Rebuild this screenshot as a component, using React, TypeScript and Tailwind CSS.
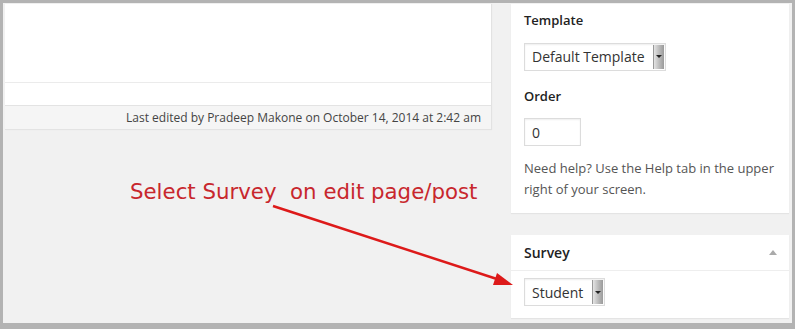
// fake select, the old-school grey drop button on the right
function OldSelect({ label, width }: { label: string; width: string }) {
  return (
    <div className={`flex h-[28px] items-stretch border border-[#dcdcdc] bg-white shadow-[inset_0_1px_2px_rgba(0,0,0,0.07)] ${width}`}>
      <span className="flex flex-1 items-center pl-[7px] text-[14px] text-[#333]">{label}</span>
      <span className="my-[1px] mr-[1px] flex w-[11px] items-center justify-center border-l border-[#999] bg-gradient-to-r from-[#e4e4e4] via-[#bdbdbd] to-[#9a9a9a]">
        <span className="h-0 w-0 border-x-[3px] border-t-[3px] border-x-transparent border-t-[#222]" />
      </span>
    </div>
  )
}

export default function App() {
  return (
    <div className="relative h-[329px] w-[795px] overflow-hidden border-[3px] border-b-[6px] border-[#b3b3b3] bg-[#f1f1f1] font-['Open_Sans',sans-serif] text-[13px] text-[#444]">
      <div className="flex h-full gap-[20px] pl-[2px] pr-[3px] pt-[1px]">
        {/* editor column */}
        <div className="w-[486px]">
          <div className="bg-white shadow-[1px_0_1px_rgba(0,0,0,0.06)]">
            <div className="h-[79px] border-b border-[#ebebeb]" />
            <div className="h-[22px]" />
            <div className="flex h-[25px] items-center justify-end border-y border-[#e3e3e3] bg-[#f5f5f5] pr-[10px] text-[12px] text-[#444]">
              Last edited by Pradeep Makone on October 14, 2014 at 2:42 am
            </div>
          </div>
        </div>

        {/* sidebar */}
        <div className="flex w-[278px] flex-col">
          <div className="h-[209px] bg-white px-[13px] shadow-[0_1px_1px_rgba(0,0,0,0.05)]">
            <p className="pt-[7px] font-semibold text-[#222]">Template</p>
            <div className="mt-[12px]">
              <OldSelect label="Default Template" width="w-[142px]" />
            </div>
            <p className="mt-[16px] font-semibold text-[#222]">Order</p>
            <div className="mt-[12px] flex h-[28px] w-[57px] items-center border border-[#dcdcdc] pl-[7px] text-[14px] text-[#333] shadow-[inset_0_1px_2px_rgba(0,0,0,0.07)]">
              0
            </div>
            <p className="mt-[12px] leading-[21px] text-[#555]">
              Need help? Use the Help tab in the upper right of your screen.
            </p>
          </div>

          <div className="mt-[22px] bg-white shadow-[0_1px_1px_rgba(0,0,0,0.05)]">
            <div className="flex h-[36px] items-center justify-between border-b border-[#eeeeee] pl-[13px] pr-[12px]">
              <span className="text-[14px] font-semibold text-[#222]">Survey</span>
              <span className="h-0 w-0 border-x-[4px] border-b-[5px] border-x-transparent border-b-[#aaa]" />
            </div>
            <div className="px-[13px] pb-[12px] pt-[7px]">
              <OldSelect label="Student" width="w-[81px]" />
            </div>
          </div>
        </div>
      </div>

      {/* annotation overlay */}
      <p className="absolute left-[127px] top-[173px] font-['DejaVu_Sans',sans-serif] text-[21.3px] whitespace-pre text-[#c8272d]">
        Select Survey  on edit page/post
      </p>
      <svg className="absolute left-[-3px] top-[-3px]" width="795" height="329" viewBox="0 0 795 329">
        <line x1="273" y1="206" x2="500" y2="280" stroke="#dd1a1a" strokeWidth="2.5" />
        <polygon points="513,285 497,273 493,285" fill="#dd1a1a" />
      </svg>
    </div>
  )
}
